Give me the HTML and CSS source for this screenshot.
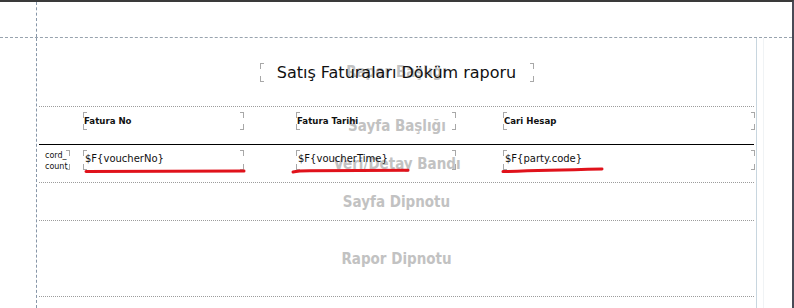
FILE: index.html
```html
<!DOCTYPE html>
<html>
<head>
    <title>Rapor Tasarımı</title>
    <link rel="stylesheet" href="styles.css">
</head>
<body>
    <div class="window">
        <div class="top-row">
            <div class="gutter"></div>
        </div>
        <div class="main-row">
            <div class="gutter"></div>
            <div class="page">
                <div class="band band-title">
                    <span class="band-label">Rapor Başlığı</span>
                    <div class="title-box corners">Satış Faturaları Döküm raporu</div>
                </div>
                <div class="band band-header">
                    <span class="band-label">Sayfa Başlığı</span>
                    <div class="fields">
                        <div class="field head col-no corners">Fatura No</div>
                        <div class="field head col-date corners">Fatura Tarihi</div>
                        <div class="field head col-party corners">Cari Hesap</div>
                    </div>
                </div>
                <div class="band band-detail">
                    <span class="band-label">Veri/Detay Bandı</span>
                    <div class="fields">
                        <div class="field count corners-right">cord_<br>count</div>
                        <div class="field value col-no corners">$F{voucherNo}</div>
                        <div class="field value col-date corners">$F{voucherTime}</div>
                        <div class="field value col-party corners">$F{party.code}</div>
                    </div>
                </div>
                <div class="band band-pagefoot">
                    <span class="band-label">Sayfa Dipnotu</span>
                </div>
                <div class="band band-summary">
                    <span class="band-label">Rapor Dipnotu</span>
                </div>
            </div>
            <div class="outside"></div>
        </div>
    </div>

    <!-- red hand marks drawn over the detail fields -->
    <svg class="marks" width="794" height="308" viewBox="0 0 794 308">
        <path d="M86 171.5 L244 171" />
        <path d="M293 172 Q298 170.8 310 170.8 L408 170.2" />
        <path d="M503 171.6 Q540 170.4 602 169" />
    </svg>
</body>
</html>
```

FILE: styles.css
```css
body {
    margin: 0;
    width: 794px;
    height: 308px;
    overflow: hidden;
    background-color: #fff;
    font-family: "DejaVu Sans", Verdana, sans-serif;
    position: relative;
}

.window {
    box-sizing: border-box;
    width: 794px;
    height: 308px;
    border-top: 2px solid #3a3a3a;
    border-right: 2px solid #4a4a56;
    display: flex;
    flex-direction: column;
}

.top-row {
    height: 35px;
    flex: none;
    display: flex;
    border-bottom: 1px dashed #98a3ae;
}

.gutter {
    width: 36px;
    flex: none;
    border-right: 1px dashed #8796a8;
}

.main-row {
    flex: 1;
    display: flex;
    min-height: 0;
}

.page {
    width: 719px;
    flex: none;
    border-right: 1px solid #c8d6df;
}

.outside {
    flex: 1;
    margin-left: 6px;
    border-left: 1px solid #f0f3f5;
}

/* report bands */
.band {
    display: grid;
    margin: 0 2px;
    border-bottom: 1px dotted #9c9c9c;
}

.band > * {
    grid-area: 1 / 1;
}

.band-title {
    height: 68px;
}

.band-header {
    height: 37px;
    border-bottom: 1px solid #000;
}

.band-detail {
    height: 37px;
}

.band-pagefoot {
    height: 37px;
}

.band-summary {
    height: 75px;
}

.band-label {
    place-self: center;
    font-family: "DejaVu Sans Condensed", "DejaVu Sans", sans-serif;
    font-stretch: condensed;
    font-weight: bold;
    font-size: 15px;
    color: #c2c2c2;
}

/* corner marks of a report element */
.corners,
.corners-right {
    --c: #a8a8a8;
}

.corners {
    background:
        linear-gradient(var(--c), var(--c)) left top / 4px 1px no-repeat,
        linear-gradient(var(--c), var(--c)) left top / 1px 6px no-repeat,
        linear-gradient(var(--c), var(--c)) right top / 4px 1px no-repeat,
        linear-gradient(var(--c), var(--c)) right top / 1px 6px no-repeat,
        linear-gradient(var(--c), var(--c)) left bottom / 4px 1px no-repeat,
        linear-gradient(var(--c), var(--c)) left bottom / 1px 6px no-repeat,
        linear-gradient(var(--c), var(--c)) right bottom / 4px 1px no-repeat,
        linear-gradient(var(--c), var(--c)) right bottom / 1px 6px no-repeat;
}

.corners-right {
    background:
        linear-gradient(var(--c), var(--c)) right top / 4px 1px no-repeat,
        linear-gradient(var(--c), var(--c)) right top / 1px 6px no-repeat,
        linear-gradient(var(--c), var(--c)) right bottom / 4px 1px no-repeat,
        linear-gradient(var(--c), var(--c)) right bottom / 1px 6px no-repeat;
}

.title-box {
    justify-self: center;
    align-self: start;
    margin-top: 25px;
    width: 274px;
    height: 19px;
    line-height: 19px;
    text-align: center;
    font-size: 16px;
    color: #111;
    white-space: nowrap;
}

.fields {
    align-self: start;
    margin-top: 5px;
    display: grid;
    grid-template-columns: 44px 161px 52px 160px 47px 252px;
}

.field {
    box-sizing: border-box;
    white-space: nowrap;
    color: #111;
}

.col-no {
    grid-column: 2;
}

.col-date {
    grid-column: 4;
}

.col-party {
    grid-column: 6;
}

.head {
    height: 18px;
    line-height: 18px;
    padding-left: 1px;
    font-size: 8.6px;
    font-weight: bold;
}

.value {
    height: 20px;
    line-height: 18px;
    padding-left: 2px;
    font-size: 10px;
}

.count {
    grid-column: 1;
    width: 31px;
    height: 20px;
    padding-left: 6px;
    font-size: 8px;
    line-height: 11px;
    overflow: hidden;
}

.marks {
    position: absolute;
    left: 0;
    top: 0;
    pointer-events: none;
}

.marks path {
    fill: none;
    stroke: #e0121b;
    stroke-width: 3;
    stroke-linecap: round;
}
```
